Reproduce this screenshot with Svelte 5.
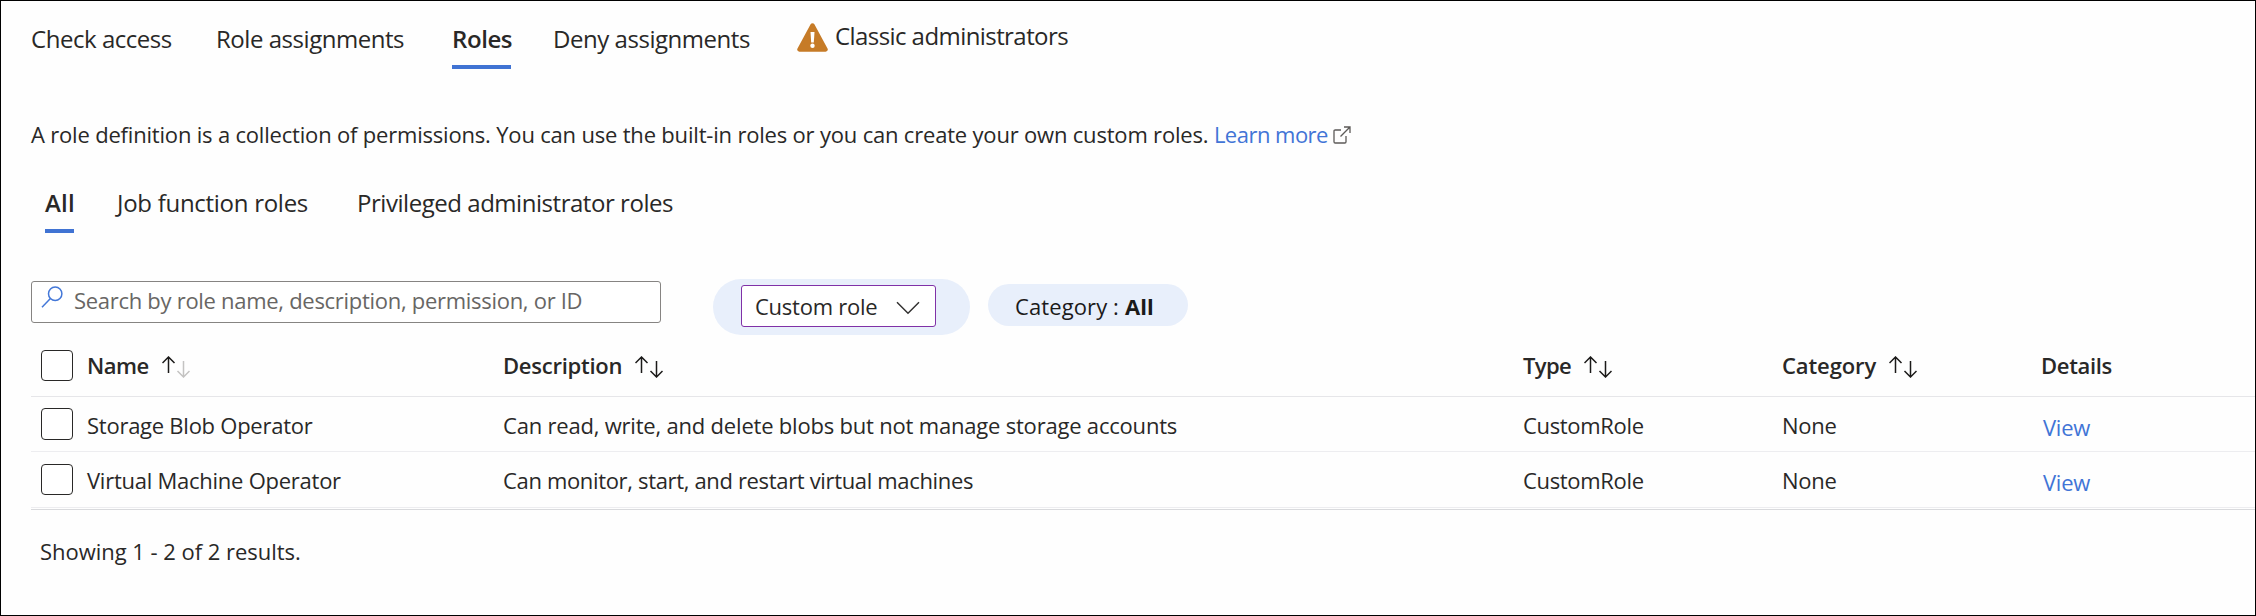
<script>
  const columns = [
    { label: 'Name', cls: 'name', sort: 'asc' },
    { label: 'Description', cls: 'desc', sort: 'both' },
    { label: 'Type', cls: 'type', sort: 'both' },
    { label: 'Category', cls: 'cat', sort: 'both' },
    { label: 'Details', cls: 'details', sort: null }
  ];
  const roles = [
    { name: 'Storage Blob Operator', description: 'Can read, write, and delete blobs but not manage storage accounts', type: 'CustomRole', category: 'None' },
    { name: 'Virtual Machine Operator', description: 'Can monitor, start, and restart virtual machines', type: 'CustomRole', category: 'None' }
  ];
</script>

<div class="panel">
  <nav class="tabs">
    <span class="tab check">Check access</span>
    <span class="tab">Role assignments</span>
    <span class="tab active roles">Roles</span>
    <span class="tab">Deny assignments</span>
    <span class="tab classic">
      <svg width="31" height="29" viewBox="0 0 31 29">
        <path d="M13.6 1.3a2.2 2.2 0 0 1 3.8 0L30.5 25.4a2.2 2.2 0 0 1-1.9 3.3H2.4a2.2 2.2 0 0 1-1.9-3.3z" fill="#c67b27" />
        <path d="M13.5 9h4l-.7 10.4h-2.6z" fill="#fff" />
        <circle cx="15.5" cy="22.8" r="2.2" fill="#fff" />
      </svg>
      <span>Classic administrators</span>
    </span>
  </nav>

  <p class="intro">
    A role definition is a collection of permissions. You can use the built-in roles or you can create your own custom roles.
    <span class="link learn">Learn more</span>
    <svg class="ext" width="18" height="18" viewBox="0 0 18 18" fill="none" stroke="#5c5a58" stroke-width="1.3">
      <path d="M8 4H2.2Q1 4 1 5.2v10.6Q1 17 2.2 17h9.6q1.200 0 1.200-1.200V10" />
      <path d="M7.500 10.500L16.700 1.300M11 1h6v6" />
    </svg>
  </p>

  <nav class="subtabs">
    <span class="tab active all">All</span>
    <span class="tab job">Job function roles</span>
    <span class="tab">Privileged administrator roles</span>
  </nav>

  <div class="filters">
    <div class="search">
      <svg width="23" height="23" viewBox="0 0 23 23" fill="none" stroke="#4377d8" stroke-width="1.500">
        <circle cx="14.200" cy="7.700" r="6.700" />
        <path d="M9.400 12.500L1 21.200" />
      </svg>
      <span>Search by role name, description, permission, or ID</span>
    </div>
    <div class="pill type-pill">
      <div class="select">
        <span>Custom role</span>
        <svg width="24" height="14" viewBox="0 0 24 14" fill="none" stroke="#323130" stroke-width="1.500">
          <path d="M1 1.200L12 12.200L23 1.200" />
        </svg>
      </div>
    </div>
    <div class="pill category-pill"><span>Category :</span><b>All</b></div>
  </div>

  <div class="table">
    <div class="row head">
      <span class="box"></span>
      {#each columns as col}
        <span class="cell">
          <span class={col.cls}>{col.label}</span>
          {#if col.sort}
            <svg class="sort" width="28" height="22" viewBox="0 0 28 22" fill="none" stroke-width="1.500">
              <path d="M6.500 17V1M.5 7l6-6 6 6" stroke="#1b1a19" />
              <path d="M21.500 5v16M15.500 15l6 6 6-6" stroke={col.sort === 'asc' ? '#c4c3c2' : '#1b1a19'} />
            </svg>
          {/if}
        </span>
      {/each}
    </div>
    {#each roles as role}
      <div class="row body">
        <span class="box"></span>
        <span class="cell">{role.name}</span>
        <span class="cell about">{role.description}</span>
        <span class="cell kind">{role.type}</span>
        <span class="cell">{role.category}</span>
        <span class="cell link view">View</span>
      </div>
    {/each}
  </div>

  <p class="count">Showing 1 - 2 of 2 results.</p>
</div>

<style>
  :global(body) { margin: 0; background: #fefefe; }
  .panel {
    box-sizing: border-box;
    width: 2256px;
    height: 616px;
    border: 1px solid #000;
    overflow: hidden;
    background: #fefefe;
    color: #292827;
    font: 400 22px/30px "Open Sans", "Noto Sans", sans-serif;
    letter-spacing: -0.25px;
    white-space: nowrap;
  }
  .tabs, .subtabs {
    display: grid;
    align-items: start;
    font-size: 24px;
    line-height: 36px;
    letter-spacing: -0.46px;
  }
  .tabs {
    grid-template-columns: 185px 236px 101px 244px auto;
    padding: 20px 0 0 30px;
    height: 48px;
  }
  .subtabs {
    grid-template-columns: 72px 240px auto;
    padding-left: 44px;
    margin-top: 36px;
    height: 48px;
  }
  .active {
    font-weight: 600;
    padding-bottom: 8px;
    border-bottom: 4px solid #4073d3;
  }
  .roles { width: 59px; letter-spacing: -0.42px; }
  .all { width: 29px; letter-spacing: 0.2px; }
  .job { letter-spacing: -0.28px; }
  .classic {
    display: flex;
    gap: 7px;
    margin-top: -3px;
    letter-spacing: -0.57px;
  }
  .classic svg { margin-top: 5px; }
  p { margin: 0; }
  .intro { margin-top: 50px; padding-left: 30px; letter-spacing: -0.19px; }
  .link { color: #4174d6; }
  .learn { letter-spacing: -0.52px; }
  .ext { vertical-align: -1px; }

  .filters {
    display: flex;
    align-items: flex-start;
    margin-top: 46px;
    padding-left: 30px;
    height: 56px;
  }
  .search {
    box-sizing: border-box;
    display: flex;
    gap: 10px;
    width: 630px;
    height: 42px;
    margin-top: 2px;
    padding: 3px 0 0 9px;
    border: 1px solid #868482;
    border-radius: 3px;
    background: #fff;
    color: #686664;
    letter-spacing: -0.29px;
  }
  .search svg { margin-top: 1px; }
  .pill { box-sizing: border-box; background: #e8effb; }
  .type-pill {
    width: 257px;
    height: 56px;
    margin-left: 52px;
    padding: 6px 0 0 28px;
    border-radius: 28px;
  }
  .select {
    box-sizing: border-box;
    display: flex;
    justify-content: space-between;
    width: 195px;
    height: 42px;
    padding: 5px 15px 0 13px;
    border: 1px solid #8031a7;
    border-radius: 3px;
    background: #fff;
  }
  .select svg { margin-top: 10px; }
  .category-pill {
    display: flex;
    gap: 6px;
    width: 200px;
    height: 42px;
    margin: 5px 0 0 18px;
    padding: 7px 0 0 27px;
    border-radius: 21px;
    color: #1b1a19;
    letter-spacing: 0.1px;
  }
  .category-pill b { font-weight: 700; }

  .table { margin-left: 30px; padding-bottom: 1px; border-bottom: 1px solid #d9dadd; }
  .row {
    display: grid;
    grid-template-columns: 46px 416px 1020px 259px 260px 1fr;
    align-items: start;
    box-sizing: border-box;
    padding-left: 10px;
    border-bottom: 1px solid #ededf0;
  }
  .box {
    box-sizing: border-box;
    width: 32px;
    height: 32px;
    border: 1.500px solid #292827;
    border-radius: 4px;
    background: #fff;
  }
  .head { height: 62px; padding-top: 15px; font-weight: 600; border-color: #e6e6e9; }
  .head .box { height: 31px; }
  .head .cell { display: flex; gap: 13px; }
  .sort { margin-top: 6px; }
  .name { letter-spacing: -0.5px; }
  .type { letter-spacing: -0.6px; }
  .cat { letter-spacing: -0.1px; }
  .details { letter-spacing: -0.33px; margin-left: -1px; }
  .body { height: 55px; padding-top: 13px; }
  .body + .body { height: 56px; }
  .body .box { margin-top: -2px; }
  .body + .body .box { margin-top: -1px; height: 31px; }
  .about { letter-spacing: -0.2px; }
  .body + .body .about { letter-spacing: -0.34px; }
  .kind { letter-spacing: -0.33px; }
  .view { padding: 2px 0 0 1px; }
  .count { margin-top: 26px; padding-left: 39px; letter-spacing: -0.03px; }
</style>
